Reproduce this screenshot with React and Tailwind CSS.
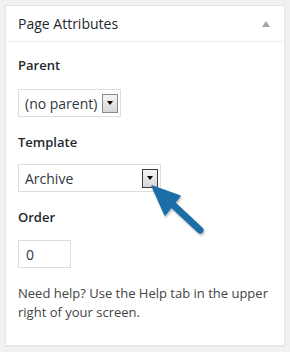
const font = { fontFamily: '"Open Sans", "Noto Sans", sans-serif' };

const DropButton = ({ dark }) => (
  <span
    className={`flex h-[19px] w-[16px] items-center justify-center border bg-gradient-to-b from-[#f6f6f6] to-[#d6d6d6] ${
      dark ? "border-[#3c3c3c]" : "border-[#8a8a8a]"
    }`}
  >
    <span className="h-0 w-0 border-x-[3.5px] border-t-[4px] border-x-transparent border-t-black" />
  </span>
);

const App = () => {
  return (
    <div className="relative h-[352px] w-[290px] bg-[#f1f1f1] p-[5px]" style={font}>
      <div className="w-[280px] border border-[#e5e5e5] bg-white shadow-[0_1px_1px_rgba(0,0,0,0.04)]">
        <div className="flex h-[36px] items-center justify-between border-b border-[#eeeeee] pl-[12px] pr-[14px]">
          <h2 className="text-[14px] leading-[18px] text-[#23282d]">Page Attributes</h2>
          <span className="h-0 w-0 border-x-[4px] border-b-[6px] border-x-transparent border-b-[#a0a5aa]" />
        </div>

        <div className="flex flex-col items-start px-[12px] pb-[23px] pt-[14px] text-[#23282d]">
          <p className="text-[13px] font-semibold leading-[18px]">Parent</p>
          <div className="mt-[15px] flex h-[28px] w-[103px] items-center justify-between border border-[#dddddd] pl-[6px] pr-[2px]">
            <span className="text-[14px] text-[#32373c]">(no parent)</span>
            <DropButton />
          </div>

          <p className="mt-[16px] text-[13px] font-semibold leading-[18px]">Template</p>
          <div className="mt-[13px] flex h-[28px] w-[143px] items-center justify-between border border-[#dddddd] pl-[6px] pr-[2px]">
            <span className="text-[14px] text-[#32373c]">Archive</span>
            <DropButton dark />
          </div>

          <p className="mt-[16px] text-[13px] font-semibold leading-[18px]">Order</p>
          <div className="mt-[14px] flex h-[28px] w-[53px] items-center border border-[#dddddd] px-[7px]">
            <span className="text-[14px] text-[#32373c]">0</span>
          </div>

          <p className="mt-[16px] text-[13px] leading-[19px] text-[#444444]">
            Need help? Use the Help tab in the upper right of your screen.
          </p>
        </div>
      </div>

      <svg
        className="pointer-events-none absolute left-0 top-0"
        width="290"
        height="352"
        viewBox="0 0 290 352"
        style={{ filter: "drop-shadow(1px 2px 1px rgba(0,0,0,0.25))" }}
      >
        <line x1="200" y1="230" x2="170" y2="202" stroke="#1c6ea6" strokeWidth="7" strokeLinecap="round" />
        <polygon points="152,186 165,215 180,196" fill="#1c6ea6" stroke="#1c6ea6" strokeWidth="1.5" strokeLinejoin="round" />
      </svg>
    </div>
  );
};

export default App;
